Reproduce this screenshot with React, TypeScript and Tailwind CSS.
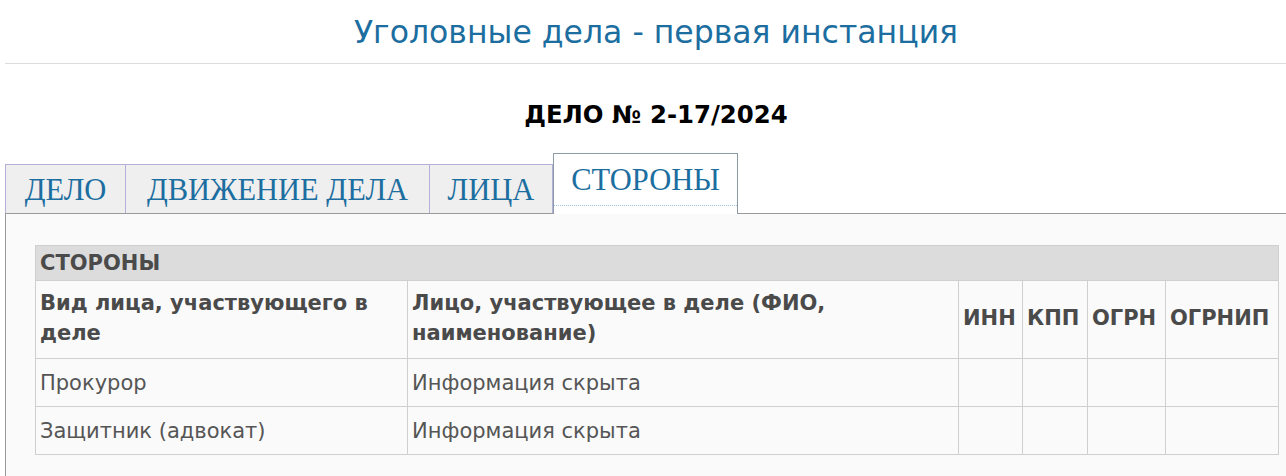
import React from "react";

const inactiveTabs = [
  { label: "ДЕЛО", w: "w-[120px]", last: false },
  { label: "ДВИЖЕНИЕ ДЕЛА", w: "w-[304px]", last: false },
  { label: "ЛИЦА", w: "w-[124px]", last: true },
];

const rows = [
  ["Прокурор", "Информация скрыта"],
  ["Защитник (адвокат)", "Информация скрыта"],
];

export default function App() {
  return (
    <div className="w-[1286px] h-[476px] overflow-hidden bg-white font-['DejaVu_Sans',sans-serif]">
      <div className="ml-[5px] w-[1302px]">
        <div className="border-b border-[#dcdcdc] pt-[14px] pb-[13px] text-center text-[31.5px] leading-[36px] text-[#1c6ea0]">
          Уголовные дела - первая инстанция
        </div>
        <div className="mt-[35px] text-center text-[24.4px] leading-[32px] font-bold text-black">
          ДЕЛО № 2-17/2024
        </div>
        <div className="mt-[22px] flex items-end font-['Liberation_Serif',serif] text-[30.5px] leading-[36px] text-[#1c6ea0]">
          {inactiveTabs.map((t) => (
            <div
              key={t.label}
              className={`${t.w} h-[49px] border-l border-t ${t.last ? "border-r" : ""} border-[#b5b0d8] bg-[#efefef] pt-[7px] pb-[5px] text-center`}
            >
              {t.label}
            </div>
          ))}
          <div className="relative z-10 -mb-px h-[61px] w-[185px] border-l border-t border-r border-[#8c9ca6] bg-white">
            <div className="border-b border-dotted border-[#9cc4de] pt-[8px] pb-[7px] text-center">
              СТОРОНЫ
            </div>
          </div>
        </div>
        <div className="h-[300px] border-l border-t border-[#9a9a9a] bg-[#fafafa] pl-[29px] pt-[31px]">
          <table className="w-[1243px] table-fixed border-collapse text-[21px] leading-[30px] text-[#555]">
            <colgroup>
              <col className="w-[372px]" />
              <col className="w-[551px]" />
              <col className="w-[64px]" />
              <col className="w-[65px]" />
              <col className="w-[78px]" />
              <col className="w-[113px]" />
            </colgroup>
            <tbody>
              <tr>
                <td colSpan={6} className="border border-[#cfcfcf] bg-[#dcdcdc] px-[4px] py-[2px] font-bold text-[#4a4a4a]">
                  СТОРОНЫ
                </td>
              </tr>
              <tr className="font-bold text-[#4a4a4a]">
                <td className="border border-[#cfcfcf] px-[4px] pt-[7px] pb-[10px] align-middle">
                  Вид лица, участвующего в деле
                </td>
                <td className="border border-[#cfcfcf] px-[4px] pt-[7px] pb-[10px] align-middle">
                  Лицо, участвующее в деле (ФИО, наименование)
                </td>
                <td className="border border-[#cfcfcf] px-[4px] pt-[7px] pb-[10px] align-middle">ИНН</td>
                <td className="border border-[#cfcfcf] px-[4px] pt-[7px] pb-[10px] align-middle">КПП</td>
                <td className="border border-[#cfcfcf] px-[4px] pt-[7px] pb-[10px] align-middle">ОГРН</td>
                <td className="border border-[#cfcfcf] px-[4px] pt-[7px] pb-[10px] align-middle">ОГРНИП</td>
              </tr>
              {rows.map((r, i) => (
                <tr key={i}>
                  <td className="border border-[#cfcfcf] px-[4px] pt-[9px] pb-[8px]">{r[0]}</td>
                  <td className="border border-[#cfcfcf] px-[4px] pt-[9px] pb-[8px]">{r[1]}</td>
                  <td className="border border-[#cfcfcf] px-[4px] pt-[9px] pb-[8px]"></td>
                  <td className="border border-[#cfcfcf] px-[4px] pt-[9px] pb-[8px]"></td>
                  <td className="border border-[#cfcfcf] px-[4px] pt-[9px] pb-[8px]"></td>
                  <td className="border border-[#cfcfcf] px-[4px] pt-[9px] pb-[8px]"></td>
                </tr>
              ))}
            </tbody>
          </table>
        </div>
      </div>
    </div>
  );
}
